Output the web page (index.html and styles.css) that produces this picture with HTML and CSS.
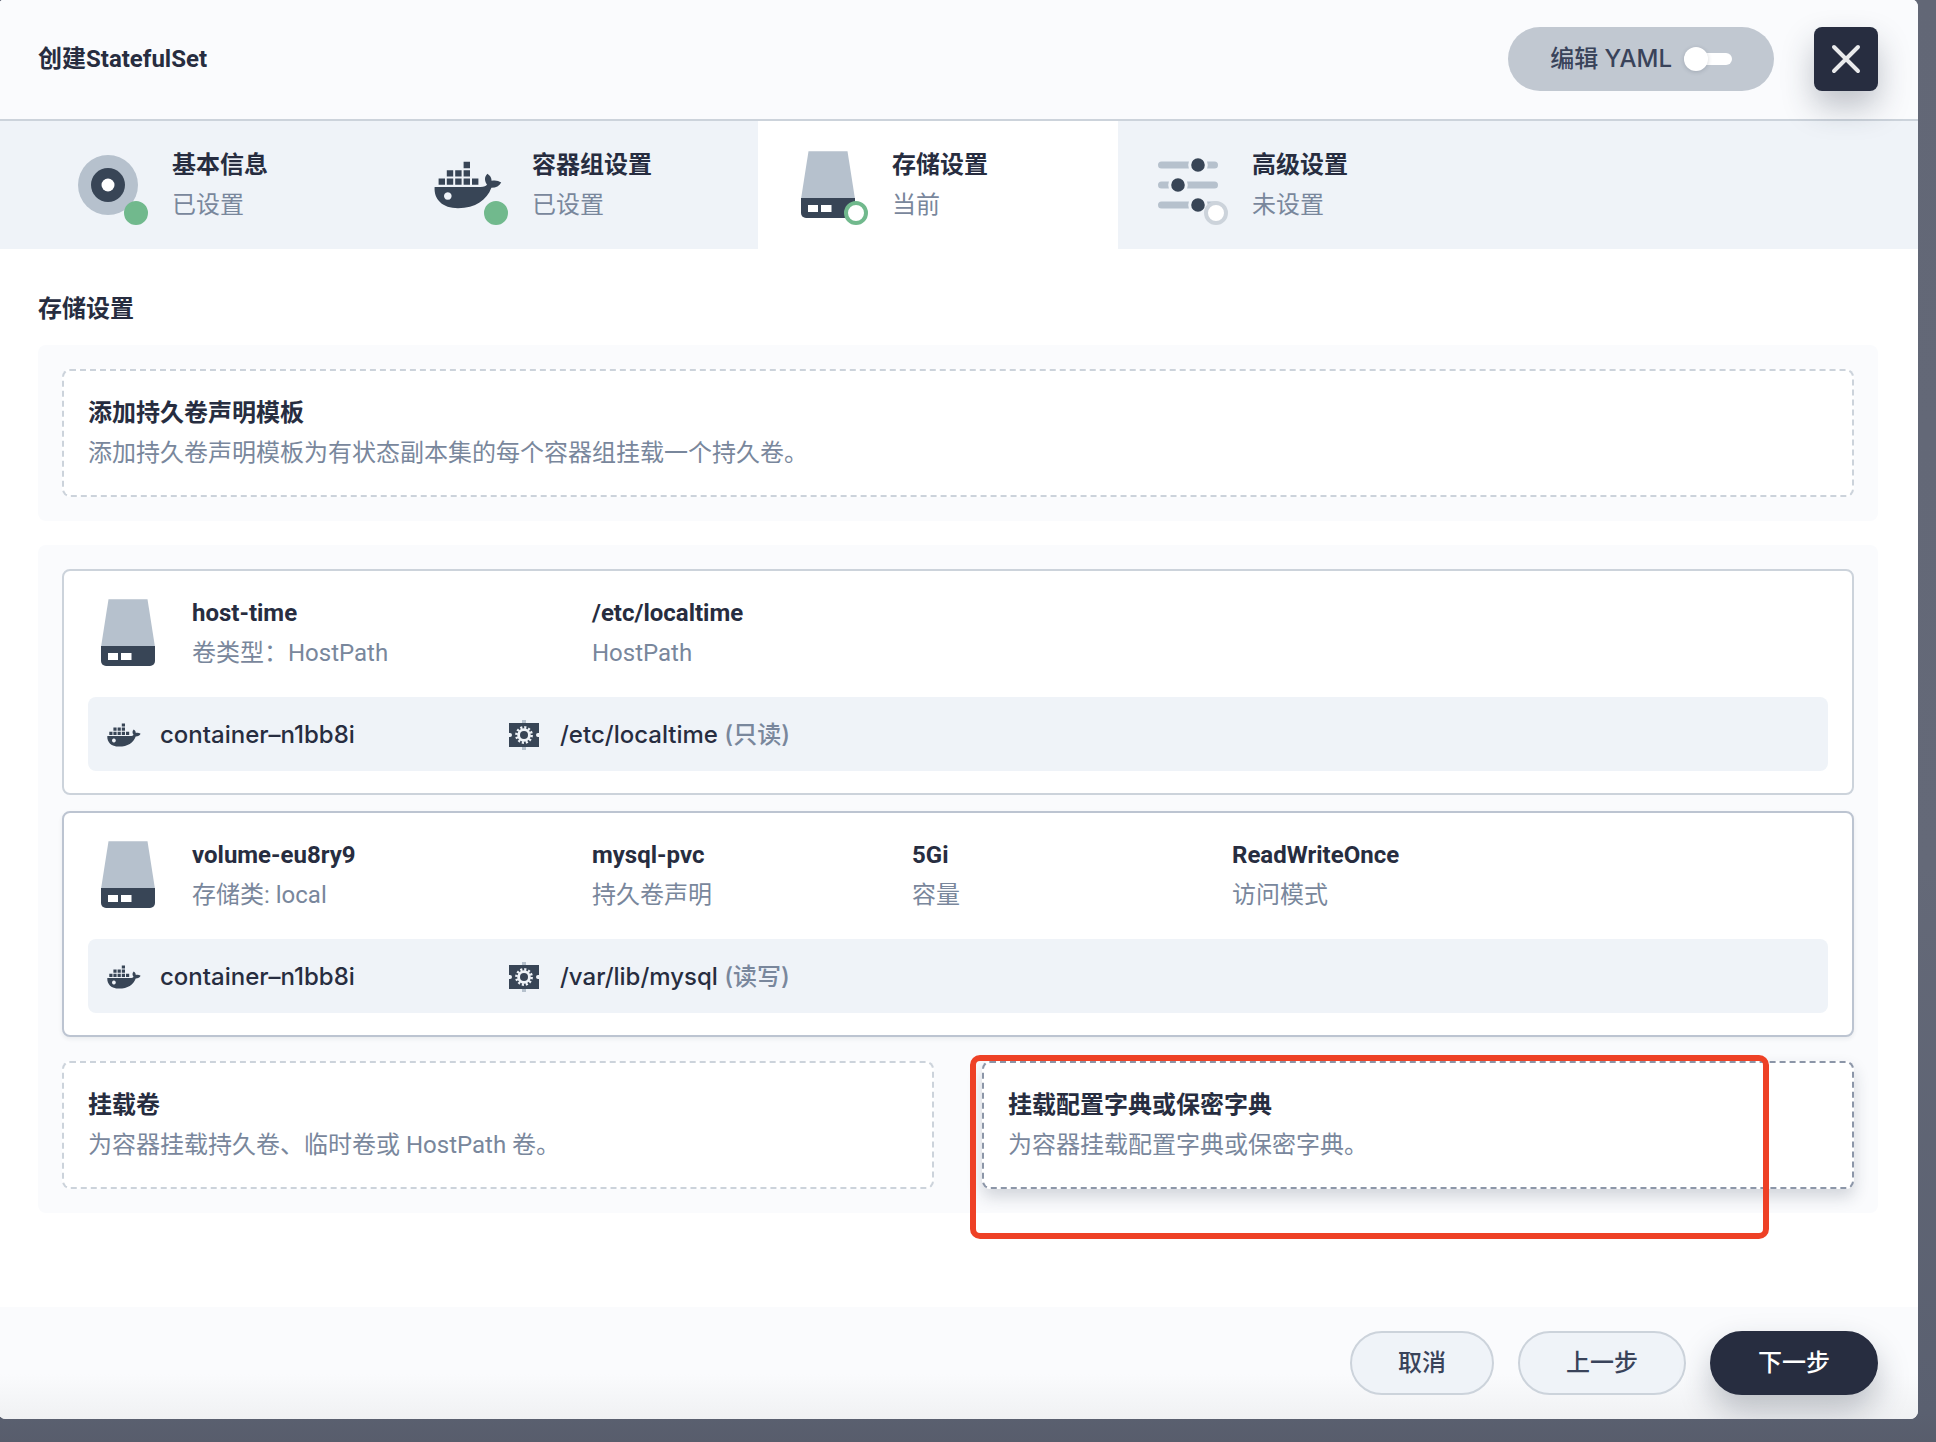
FILE: index.html
```html
<!DOCTYPE html>
<html lang="zh-CN">
<head>
<meta charset="utf-8">
<title>创建StatefulSet</title>
<link rel="stylesheet" href="styles.css">
</head>
<body>
<svg class="sprite" aria-hidden="true">
  <symbol id="docker" viewBox="0 0 80 80">
    <g fill="#384556">
      <path d="M35.6 16.8h6.4v6.4h-6.4zM18.8 25.2h6.4v6.4h-6.4zM27.2 25.2h6.4v6.4h-6.4zM35.6 25.2h6.4v6.4h-6.4zM10.6 33.4h6.4v6.4h-6.4zM18.8 33.4h6.4v6.4h-6.4zM27.2 33.4h6.4v6.4h-6.4zM35.6 33.4h6.4v6.4h-6.4zM44 33.4h6.4v6.4h-6.4z"/>
      <path fill-rule="evenodd" d="M6.6 42h46c3.400 0 5.800-.8 6.400-2.400-2.600-3.600-2.800-7.800.4-10.800 2.800 1.800 4.200 4 4.200 7 3.400-.8 6.800-.3 9.600 1.800-1.800 3.600-5 5.200-9.800 5.200C58.800 55 47.600 63.200 30 63.200 14.600 63.200 5.800 54.600 6.600 42zM19.800 47.200a3.800 3.800 0 1 0 .01 0z"/>
    </g>
  </symbol>
  <symbol id="storage" viewBox="0 0 80 80">
    <path d="M20.500 6.200h39L67 54H13z" fill="#b6c1cd"/>
    <path d="M13 53h54v15a5 5 0 0 1-5 5H18a5 5 0 0 1-5-5z" fill="#384556"/>
    <path d="M20 60h10v7H20zM33 60h10.500v7H33z" fill="#fff"/>
  </symbol>
  <symbol id="gear" viewBox="0 0 40 40">
    <path d="M18 5h4v30h-4z" fill="#b6c1cd"/>
    <path d="M5 8h30v10h-1a2 2 0 0 0 0 4h1v10H5V22h1a2 2 0 0 0 0-4H5z" fill="#384556"/>
    <circle cx="20" cy="20" r="6.800" fill="#eff3f8"/>
    <circle cx="20" cy="20" r="7.600" fill="none" stroke="#eff3f8" stroke-width="2.600" stroke-dasharray="2.100 1.879"/>
    <circle cx="20" cy="20" r="4" fill="#384556"/>
  </symbol>
</svg>

<main class="modal">
  <header class="modal-header">
    <h1 class="title">创建StatefulSet</h1>
    <label class="yaml-switch">
      <span>编辑<span class="wide"> YAML</span></span>
      <input type="checkbox" class="switch">
    </label>
    <button class="close" type="button" aria-label="关闭">
      <svg width="32" height="32" viewBox="0 0 32 32"><path d="M4 4l24 24M28 4L4 28" stroke="#e9eaec" stroke-width="4" stroke-linecap="round"/></svg>
    </button>
  </header>

  <ol class="steps">
    <li class="step">
      <div class="icon">
        <svg viewBox="0 0 80 80"><circle cx="40" cy="40" r="30" fill="#b6c1cd"/><circle cx="40" cy="40" r="17" fill="#384556"/><circle cx="40" cy="40" r="6.500" fill="#fff"/></svg>
        <span class="dot done"></span>
      </div>
      <div class="text"><strong>基本信息</strong><span>已设置</span></div>
    </li>
    <li class="step">
      <div class="icon"><svg><use href="#docker"/></svg><span class="dot done"></span></div>
      <div class="text"><strong>容器组设置</strong><span>已设置</span></div>
    </li>
    <li class="step current" aria-current="step">
      <div class="icon"><svg><use href="#storage"/></svg><span class="dot active"></span></div>
      <div class="text"><strong>存储设置</strong><span>当前</span></div>
    </li>
    <li class="step">
      <div class="icon">
        <svg viewBox="0 0 80 80">
          <path d="M13.500 20h53M13.500 40h53M13.500 60h53" stroke="#b6c1cd" stroke-width="7" stroke-linecap="round"/>
          <g fill="#384556" stroke="#eff3f8" stroke-width="3"><circle cx="50" cy="20" r="8.300"/><circle cx="30" cy="40" r="8.300"/><circle cx="50" cy="60" r="8.300"/></g>
        </svg>
        <span class="dot"></span>
      </div>
      <div class="text"><strong>高级设置</strong><span>未设置</span></div>
    </li>
  </ol>

  <section class="content">
    <h2 class="title">存储设置</h2>
    <div class="group">
      <button type="button" class="add text"><strong>添加持久卷声明模板</strong><span>添加持久卷声明模板为有状态副本集的每个容器组挂载一个持久卷。</span></button>
    </div>

    <div class="group">
      <article class="volume">
        <div class="summary">
          <div class="icon"><svg><use href="#storage"/></svg></div>
          <div class="text name"><strong>host-time</strong><span>卷类型：HostPath</span></div>
          <div class="text"><strong>/etc/localtime</strong><span>HostPath</span></div>
        </div>
        <div class="mount">
          <div class="part"><svg><use href="#docker"/></svg><span class="wide">container–n1bb8i</span></div>
          <div class="part"><svg><use href="#gear"/></svg><span class="wide">/etc/localtime <span class="mode">(只读)</span></span></div>
        </div>
      </article>
      <article class="volume hovered">
        <div class="summary">
          <div class="icon"><svg><use href="#storage"/></svg></div>
          <div class="text name"><strong>volume-eu8ry9</strong><span>存储类: local</span></div>
          <div class="text"><strong>mysql-pvc</strong><span>持久卷声明</span></div>
          <div class="text"><strong>5Gi</strong><span>容量</span></div>
          <div class="text"><strong>ReadWriteOnce</strong><span>访问模式</span></div>
        </div>
        <div class="mount">
          <div class="part"><svg><use href="#docker"/></svg><span class="wide">container–n1bb8i</span></div>
          <div class="part"><svg><use href="#gear"/></svg><span class="wide">/var/lib/mysql <span class="mode">(读写)</span></span></div>
        </div>
      </article>
      <div class="choices">
        <button type="button" class="add text"><strong>挂载卷</strong><span>为容器挂载持久卷、临时卷或 HostPath 卷。</span></button>
        <div class="marked">
          <button type="button" class="add text hovered"><strong>挂载配置字典或保密字典</strong><span>为容器挂载配置字典或保密字典。</span></button>
          <div class="marker"></div>
        </div>
      </div>
    </div>
  </section>

  <footer class="modal-footer">
    <button type="button" class="btn">取消</button>
    <button type="button" class="btn">上一步</button>
    <button type="button" class="btn primary">下一步</button>
  </footer>
</main>
</body>
</html>
```
FILE: styles.css
```css
* { box-sizing: border-box; }

body {
  margin: 0;
  min-height: 100vh;
  overflow: hidden;
  background: linear-gradient(#626776 0%, #646978 60%, #5a6070 98%, #585d6c 100%);
  color: #272d40;
  font: 400 24px/40px Roboto, "Noto Sans CJK SC", sans-serif;
}

button {
  font: inherit;
  color: inherit;
  cursor: pointer;
}

.sprite { position: absolute; width: 0; height: 0; }

.modal {
  display: flex;
  flex-direction: column;
  min-height: calc(100vh - 22px);
  margin: -1px 18px 0 -2px;
  border-radius: 8px;
  background: #fff;
  overflow: hidden;
}

.modal-header {
  display: flex;
  align-items: center;
  gap: 40px;
  padding: 28px 40px;
  border-bottom: 2px solid #ccd3db;
  background: #fafbfd;
}

.title {
  flex: 1;
  margin: 0;
  font-size: 24px;
  line-height: 40px;
  font-weight: 700;
}

.wide {
  font-family: Inter, "Noto Sans CJK SC", sans-serif;
  font-weight: 500;
}

.yaml-switch {
  display: flex;
  align-items: center;
  gap: 12px;
  height: 64px;
  padding: 0 42px;
  border-radius: 32px;
  background: #c1c8d1;
  color: #39435a;
  font-weight: 500;
}

.switch {
  position: relative;
  appearance: none;
  width: 48px;
  height: 12px;
  margin: 0;
  border-radius: 6px;
  background: #fff;
}

.switch::before {
  content: "";
  position: absolute;
  left: 0;
  top: -6px;
  width: 24px;
  height: 24px;
  border-radius: 50%;
  background: #fff;
  box-shadow: 0 1px 4px rgba(36, 46, 66, .2);
}

.close {
  position: relative;
  display: grid;
  place-items: center;
  width: 64px;
  height: 64px;
  padding: 0;
  border: 0;
  border-radius: 8px;
  background: #272d40;
  box-shadow: 0 16px 32px rgba(36, 46, 66, .28);
}

.steps {
  display: flex;
  margin: 0;
  padding: 0 40px;
  list-style: none;
  background: #eff3f8;
}

.step {
  display: flex;
  gap: 24px;
  width: 360px;
  padding: 24px 0 24px 30px;
}

.step.current { background: #fff; }

.icon { position: relative; width: 80px; height: 80px; }
.icon svg { display: block; width: 80px; height: 80px; }

.dot {
  position: absolute;
  right: 0;
  bottom: 0;
  width: 24px;
  height: 24px;
  border: 4px solid #ccd3db;
  border-radius: 50%;
  background: #fff;
}

.dot.active { border-color: #71b98d; }
.dot.done { border-color: #71b98d; background: #71b98d; }

.text strong, .text > span { display: block; }
.text strong { font-weight: 700; }
.text > span { color: #79879c; }

.content {
  display: flex;
  flex: 1;
  flex-direction: column;
  gap: 24px;
  padding: 40px;
}

.content .title { flex: none; margin-bottom: -8px; }

.group {
  padding: 24px;
  border-radius: 8px;
  background: #fafbfd;
}

.add {
  display: block;
  width: 100%;
  padding: 22px 24px;
  border: 2px dashed #ccd3db;
  border-radius: 8px;
  background: #fff;
  text-align: left;
}

.add.hovered {
  border-color: #8c96a8;
  box-shadow: 0 8px 16px rgba(36, 46, 66, .18);
}

.volume {
  padding: 22px 24px;
  border: 2px solid #ccd3db;
  border-radius: 8px;
  background: #fff;
}

.volume + .volume { margin-top: 16px; }
.volume.hovered { border-color: #bcc4d1; box-shadow: 0 2px 4px rgba(36, 46, 66, .08); }

.summary { display: flex; margin-bottom: 24px; }
.summary .text { width: 320px; }
.summary .name { width: 400px; margin-left: 24px; }

.mount {
  display: flex;
  padding: 18px 16px 16px;
  border-radius: 8px;
  background: #eff3f8;
}

.part { display: flex; gap: 16px; width: 400px; }
.part svg { width: 40px; height: 40px; }
.mode { color: #79879c; }

.choices {
  display: grid;
  grid-template-columns: 1fr 1fr;
  gap: 48px;
  margin-top: 24px;
}

.marked { position: relative; }

.marker {
  position: absolute;
  inset: -6px 85px -50px -12px;
  border: 6px solid #ee4126;
  border-radius: 10px;
  pointer-events: none;
}

.modal-footer {
  display: flex;
  justify-content: flex-end;
  gap: 24px;
  padding: 24px 40px;
  background: linear-gradient(#fafbfd 60%, #f0f1f3);
}

.btn {
  height: 64px;
  padding: 0 46px;
  border: 2px solid #ccd3db;
  border-radius: 32px;
  background: #eff3f8;
  color: #39435a;
  font-weight: 500;
}

.btn.primary {
  border-color: #272d40;
  background: #272d40;
  color: #fff;
  box-shadow: 0 16px 32px rgba(36, 46, 66, .28);
}
```
